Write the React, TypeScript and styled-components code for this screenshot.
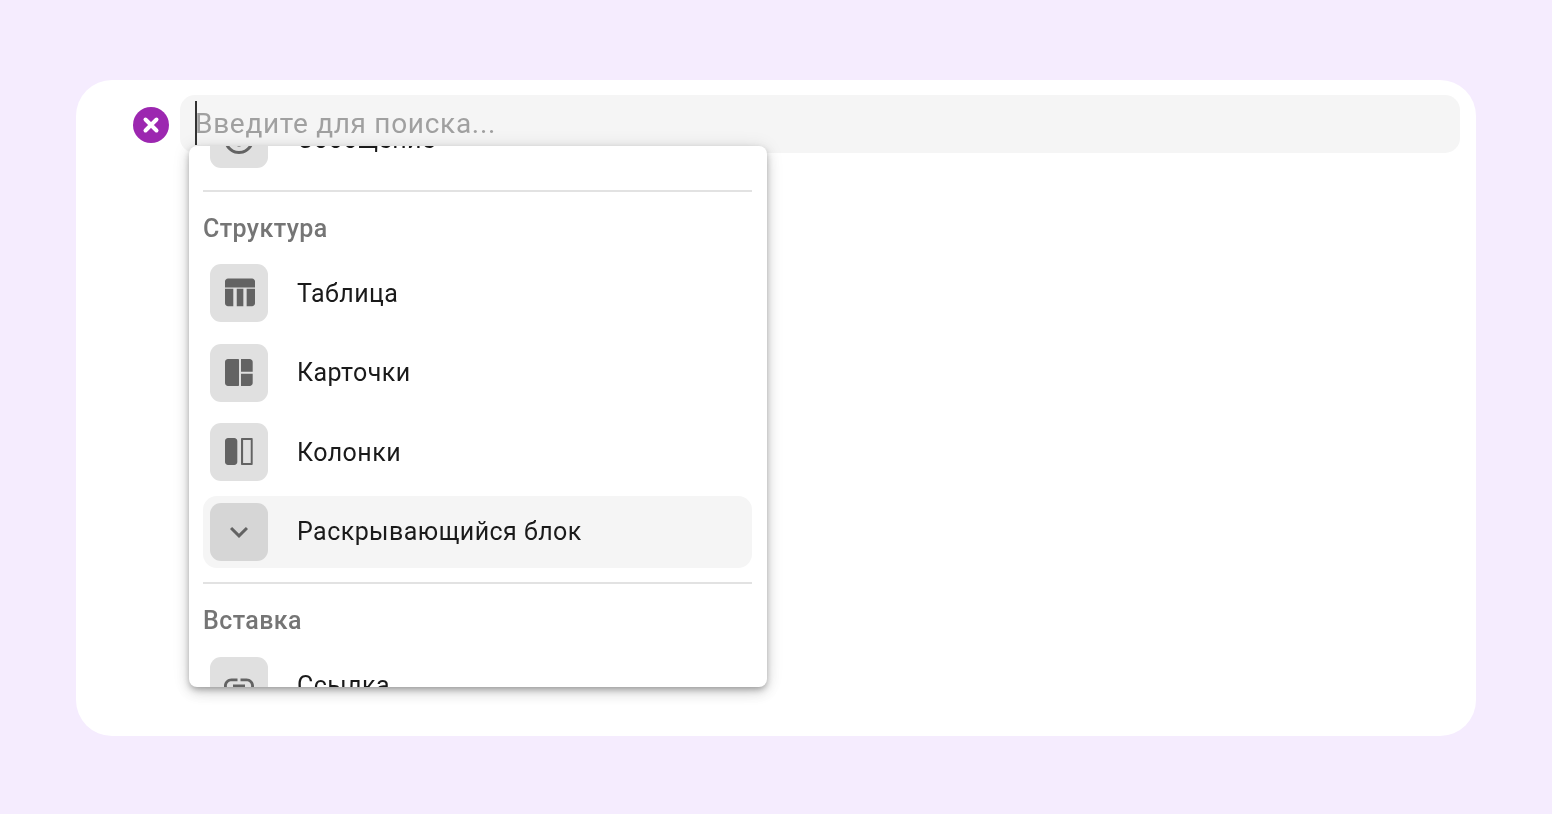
import * as React from "react";
import styled, { createGlobalStyle } from "styled-components";

const GlobalStyle = createGlobalStyle`
  html, body {
    margin: 0;
    padding: 0;
    height: 100%;
    overflow: hidden;
  }
  body {
    font-family: Roboto, "Noto Sans", sans-serif;
  }
`;

const Page = styled.div`
  width: 1552px;
  height: 814px;
  padding: 80px 76px 78px;
  box-sizing: border-box;
  background: #f5ecfe;
`;

const Card = styled.div`
  position: relative;
  height: 656px;
  box-sizing: border-box;
  padding: 15px 16px 0 57px;
  background: #ffffff;
  border-radius: 36px;
  will-change: transform;
`;

const SearchRow = styled.div`
  display: flex;
  align-items: center;
  gap: 11px;
`;

const ClearButton = styled.div`
  flex: none;
  width: 36px;
  height: 36px;
  margin-top: 2px;

  svg {
    display: block;
  }
`;

const SearchBar = styled.div`
  flex: 1;
  height: 58px;
  display: flex;
  align-items: center;
  padding-left: 15px;
  box-sizing: border-box;
  background: #f5f5f5;
  border-radius: 15px;
`;

const Caret = styled.span`
  flex: none;
  width: 2px;
  height: 44px;
  margin: -2px -2px 0 0;
  background: #333333;
`;

const Placeholder = styled.span`
  font-size: 28px;
  line-height: 58px;
  letter-spacing: 0.7px;
  color: #a0a0a0;
  white-space: nowrap;
`;

const Menu = styled.div`
  position: absolute;
  left: 113px;
  top: 66px;
  width: 578px;
  height: 541px;
  overflow: hidden;
  background: #ffffff;
  border-radius: 8px;
  box-shadow: 0 3px 6px -1px rgba(0, 0, 0, 0.3), 0 6px 14px 0 rgba(0, 0, 0, 0.12), 0 1px 18px 0 rgba(0, 0, 0, 0.1);
`;

const MenuContent = styled.div`
  margin: -43px 15px 0 14px;
`;

const Row = styled.div<{ $active?: boolean }>`
  display: flex;
  align-items: center;
  gap: 29px;
  height: 72px;
  padding-left: 7px;
  margin-bottom: 7.5px;
  box-sizing: border-box;
  border-radius: 14px;
  background: ${(p) => (p.$active ? "#f5f5f5" : "transparent")};
`;

const IconBox = styled.div<{ $active?: boolean }>`
  flex: none;
  width: 58px;
  height: 58px;
  display: flex;
  align-items: center;
  justify-content: center;
  border-radius: 11px;
  color: #636363;
  background: ${(p) => (p.$active ? "#d6d6d6" : "#e0e0e0")};
`;

const RowLabel = styled.span`
  font-size: 25px;
  letter-spacing: 0.45px;
  color: #1a1a1a;
  white-space: nowrap;
`;

const Divider = styled.div`
  height: 2px;
  margin-top: 14.5px;
  background: #e2e2e2;
`;

const GroupTitle = styled.div`
  height: 65.5px;
  padding-top: 21px;
  box-sizing: border-box;
  font-size: 25px;
  line-height: 32px;
  font-weight: 500;
  letter-spacing: 0.4px;
  color: #757575;
`;

const Icon = ({ d }: { d: string }) => (
  <svg width="36" height="36" viewBox="0 0 24 24" fill="currentColor">
    <path d={d} />
  </svg>
);

const icons = {
  message:
    "M11 15h2v2h-2zm0-8h2v6h-2zm.99-5C6.47 2 2 6.48 2 12s4.47 10 10 10 10-4.48 10-10S17.52 2 11.99 2zM12 20c-4.42 0-8-3.58-8-8s3.58-8 8-8 8 3.58 8 8-3.58 8-8 8z",
  table:
    "M10.500 9.200h4.400v11.600h-4.400zM17.100 20.800h3.570c1.100 0 2-.9 2-2V9.200h-5.570v11.600zM20.670 2.330h-16c-1.100 0-2 .9-2 2v4h20v-4c0-1.100-.9-2-2-2zM2.670 18.800c0 1.100.9 2 2 2H8.200V9.200H2.670v9.600z",
  cards:
    "M4.670 2.670h6.830c.3 0 .5.2.5.5v17c0 .3-.2.5-.5.5H4.670c-1.100 0-2-.9-2-2v-14c0-1.100.9-2 2-2zM13.330 2.670h5.800c1.100 0 2 .9 2 2v6.460h-7.800V2.670zM13.330 12.470h7.800v6.200c0 1.100-.9 2-2 2h-5.800v-8.200z",
  columns:
    "M4.670 2.670h4.200c1.100 0 2 .9 2 2v14c0 1.100-.9 2-2 2h-4.200c-1.100 0-2-.9-2-2v-14c0-1.100.9-2 2-2zM13.830 2.670h6.800c.3 0 .5.2.5.5v17c0 .3-.2.5-.5.5h-6.800c-.3 0-.5-.2-.5-.5v-17c0-.3.2-.5.5-.5zm.9 1.300v15.400h5.100V3.970h-5.100z",
  expand: "M16.590 8.590L12 13.170 7.410 8.590 6 10l6 6 6-6z",
  link:
    "M3.900 12c0-1.710 1.390-3.100 3.100-3.100h4V7H7c-2.760 0-5 2.240-5 5s2.240 5 5 5h4v-1.900H7c-1.710 0-3.100-1.390-3.100-3.100zM8 13h8v-2H8v2zm9-6h-4v1.900h4c1.710 0 3.100 1.390 3.100 3.100s-1.390 3.100-3.100 3.100h-4V17h4c2.760 0 5-2.240 5-5s-2.240-5-5-5z",
};

const MenuRow = ({ icon, label, active }: { icon: string; label: string; active?: boolean }) => (
  <Row $active={active}>
    <IconBox $active={active}>
      <Icon d={icon} />
    </IconBox>
    <RowLabel>{label}</RowLabel>
  </Row>
);

export default function App() {
  return (
    <>
      <GlobalStyle />
      <Page>
        <Card>
          <SearchRow>
            <ClearButton>
              <svg width="36" height="36" viewBox="0 0 36 36">
                <circle cx="18" cy="18" r="18" fill="#9c27b0" />
                <path d="M12.500 12.500l11 11M23.500 12.500l-11 11" stroke="#fff" strokeWidth="4" strokeLinecap="round" />
              </svg>
            </ClearButton>
            <SearchBar>
              <Caret />
              <Placeholder>Введите для поиска...</Placeholder>
            </SearchBar>
          </SearchRow>
          <Menu>
            <MenuContent>
              <MenuRow icon={icons.message} label="Сообщение" />
              <Divider />
              <GroupTitle>Структура</GroupTitle>
              <MenuRow icon={icons.table} label="Таблица" />
              <MenuRow icon={icons.cards} label="Карточки" />
              <MenuRow icon={icons.columns} label="Колонки" />
              <MenuRow icon={icons.expand} label="Раскрывающийся блок" active />
              <Divider />
              <GroupTitle>Вставка</GroupTitle>
              <MenuRow icon={icons.link} label="Ссылка" />
            </MenuContent>
          </Menu>
        </Card>
      </Page>
    </>
  );
}
